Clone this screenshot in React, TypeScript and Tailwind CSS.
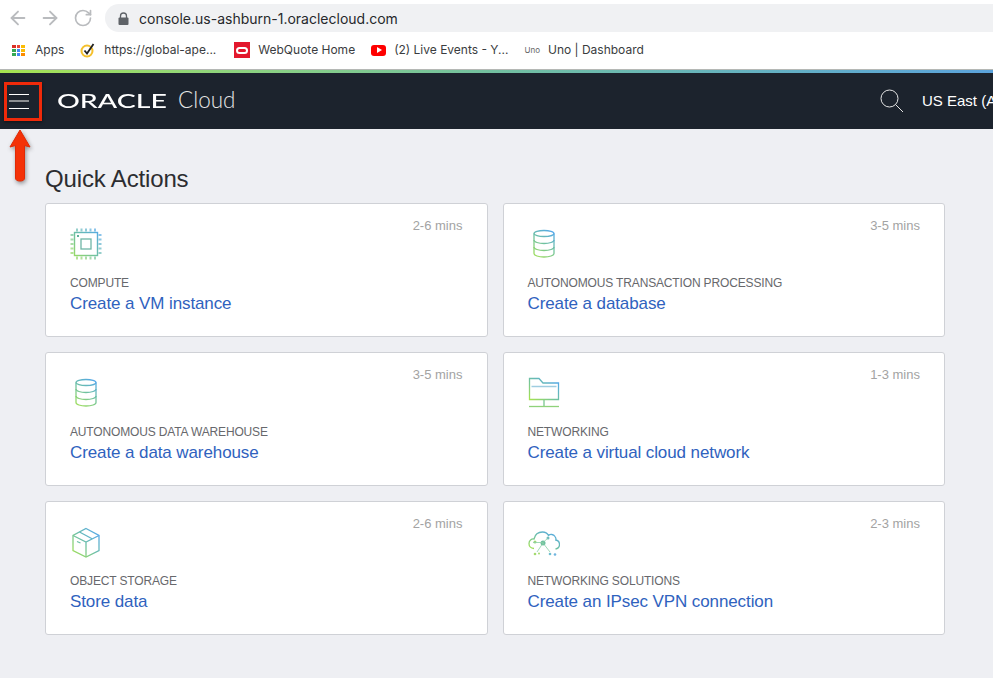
import { ArrowLeft, ArrowRight, RotateCw } from "lucide-react"
import type { ReactNode } from "react"

const Grad = ({ id }: { id: string }) => (
  <defs>
    <linearGradient id={id} x1="0" y1="1" x2="1" y2="0">
      <stop offset="0" stopColor="#a6e34f" />
      <stop offset="0.5" stopColor="#6dbfa6" />
      <stop offset="1" stopColor="#4fa3f7" />
    </linearGradient>
  </defs>
)

const ChipIcon = () => (
  <svg width="36" height="36" viewBox="0 0 36 36" fill="none" className="-m-0.5">
    <defs>
      <linearGradient id="chip" gradientUnits="userSpaceOnUse" x1="2" y1="34" x2="34" y2="2">
        <stop offset="0" stopColor="#a6e34f" />
        <stop offset="0.5" stopColor="#6dbfa6" />
        <stop offset="1" stopColor="#4fa3f7" />
      </linearGradient>
    </defs>
    <rect x="6.5" y="6.5" width="23" height="23" stroke="url(#chip)" strokeWidth="1.4" />
    <rect x="13" y="13" width="10" height="10" stroke="#6fb5a6" strokeWidth="1.3" />
    <rect x="9" y="9" width="2" height="2" fill="#5fb09a" />
    <path d="M9 2.500v3M13.500 2.500v3M18 2.500v3M22.500 2.500v3M27 2.500v3M9 30.500v3M13.500 30.500v3M18 30.500v3M22.500 30.500v3M27 30.500v3M2.500 9h3M2.500 13.500h3M2.500 18h3M2.500 22.500h3M2.500 27h3M30.500 9h3M30.500 13.500h3M30.500 18h3M30.500 22.500h3M30.500 27h3" stroke="url(#chip)" strokeWidth="2" opacity="0.7" />
  </svg>
)

const DbIcon = ({ id }: { id: string }) => (
  <svg width="32" height="32" viewBox="0 0 32 32" fill="none">
    <defs>
      <linearGradient id={id} gradientUnits="userSpaceOnUse" x1="6" y1="31" x2="26" y2="1">
        <stop offset="0" stopColor="#a6e34f" />
        <stop offset="0.55" stopColor="#6dbfa6" />
        <stop offset="1" stopColor="#4fa3f7" />
      </linearGradient>
    </defs>
    <path d="M6 5.500v20c0 2 4.500 3.500 10 3.500s10-1.500 10-3.500v-20" stroke={`url(#${id})`} strokeWidth="1.3" />
    <ellipse cx="16" cy="5.500" rx="10" ry="3" stroke={`url(#${id})`} strokeWidth="1.3" />
    <path d="M6 12c0 2 4.500 3.500 10 3.500s10-1.500 10-3.500M6 19c0 2 4.500 3.500 10 3.500s10-1.500 10-3.500" stroke={`url(#${id})`} strokeWidth="1.3" />
  </svg>
)

const FolderIcon = () => (
  <svg width="32" height="32" viewBox="0 0 32 32" fill="none">
    <Grad id="folder" />
    <path d="M1.500 22.500V1.500h9.500l4 4.500h15.500v16.500z" stroke="url(#folder)" strokeWidth="1.3" />
    <path d="M3.500 9.500h25" stroke="#9fcde0" strokeWidth="1.5" />
    <path d="M16 23v6" stroke="#7cc68f" strokeWidth="1.3" />
    <path d="M1 29.500h30" stroke="#8fd27a" strokeWidth="1.3" />
  </svg>
)

const BoxIcon = () => (
  <svg width="32" height="32" viewBox="0 0 32 32" fill="none">
    <Grad id="box" />
    <path d="M16 2.500 29 9.500v15L16 31 3 24.500v-15z" stroke="url(#box)" strokeWidth="1.3" />
    <path d="M3 9.500 16 16l13-6.500M16 16v15M9.500 6l13 7" stroke="url(#box)" strokeWidth="1.3" />
    <path d="M7 15.500l3.500 1.500" stroke="#6dbfa6" strokeWidth="1.3" />
  </svg>
)

const CloudIcon = () => (
  <svg width="32" height="32" viewBox="0 0 32 32" fill="none" className="translate-y-[2px]">
    <Grad id="cloud" />
    <path d="M6 20.500c-3.500 0-5-2.500-5-5 0-3 2.500-5 5-4.500C7 6.500 10.500 4 14.500 4c3 0 5 1.500 6 3.500 1.500-1.500 5-1.500 6.500 1 1 1.500 1 3 .8 3.500 2.500.5 3.700 2.500 3.700 4.500 0 2.500-1.500 4-4 4.500" stroke="url(#cloud)" strokeWidth="1.3" />
    <circle cx="15" cy="15" r="2.500" fill="#6cbf9f" />
    <circle cx="7" cy="14" r="1.500" fill="#9ed67a" />
    <circle cx="20" cy="10" r="1.500" fill="#6fbcc0" />
    <path d="M5 14.500h10l5-4.500M15 15l-6 9M15 15l7 9" stroke="#8ccfa6" strokeWidth="0.8" />
    <circle cx="7" cy="26" r="1.300" fill="#a3da70" />
    <circle cx="11" cy="25.500" r="1" fill="#a3da70" />
    <circle cx="22" cy="26" r="1.300" fill="#70bfd0" />
    <circle cx="27" cy="26.500" r="1.300" fill="#70b5e0" />
  </svg>
)

const Card = ({ icon, time, label, title }: { icon: ReactNode; time: string; label: string; title: string }) => (
  <div className="h-[134px] rounded-[3px] border border-[#cfd1d6] bg-white pl-[24px] pr-[24px] pt-[14px]">
    <div className="flex h-[44px] items-start justify-between">
      <div className="mt-[10px] h-8 w-8">{icon}</div>
      <span className="text-[13px] leading-[16px] text-[#a3a3a3]">{time}</span>
    </div>
    <div className="mt-[13px] text-[12px] leading-[16px] tracking-[-0.15px] text-[#67686c]">{label}</div>
    <div className="mt-[1px] text-[17px] leading-[24px] tracking-[-0.1px] text-[#2f62be]">{title}</div>
  </div>
)

const Bookmark = ({ icon, text }: { icon: ReactNode; text: string }) => (
  <div className="flex items-center gap-[8px] whitespace-nowrap">
    {icon}
    <span>{text}</span>
  </div>
)

export default function App() {
  return (
    <div className="relative h-[678px] w-[993px] overflow-hidden bg-[#eeeff3] font-['Liberation_Sans',sans-serif]">
      {/* browser toolbar */}
      <div className="flex h-[36px] items-center bg-white pl-[7px]">
        <div className="flex w-[98px] items-center gap-[10px] text-[#b9bbbe]">
          <ArrowLeft size={22} strokeWidth={2} />
          <ArrowRight size={22} strokeWidth={2} />
          <RotateCw size={20} strokeWidth={2} className="ml-[2px]" />
        </div>
        <div className="flex h-[28px] flex-1 items-center gap-[10px] rounded-l-full bg-[#f0f1f3] pl-[13px] font-['Inter',sans-serif] text-[14px] text-[#26282b]">
          <svg width="11" height="13" viewBox="0 0 11 13" fill="none">
            <path d="M2.500 6V4a3 3 0 0 1 6 0v2" stroke="#5f6368" strokeWidth="1.300" />
            <rect x="0.500" y="5.500" width="10" height="7.500" rx="1" fill="#5f6368" />
          </svg>
          <span>console.us-ashburn-1.oraclecloud.com</span>
        </div>
      </div>
      {/* bookmarks */}
      <div className="flex h-[33px] items-center gap-[16px] bg-white pb-[5px] pl-[12px] font-['Inter',sans-serif] text-[12px] text-[#3a3c40]">
        <Bookmark
          text="Apps"
          icon={
            <div className="mr-[2px] grid w-[13px] grid-cols-3 gap-[1px]">
              <i className="h-[3px] bg-[#d93025]" />
              <i className="h-[3px] bg-[#ea4335]" />
              <i className="h-[3px] bg-[#fbbc04]" />
              <i className="h-[3px] bg-[#34a853]" />
              <i className="h-[3px] bg-[#4285f4]" />
              <i className="h-[3px] bg-[#fbbc04]" />
              <i className="h-[3px] bg-[#34a853]" />
              <i className="h-[3px] bg-[#4285f4]" />
              <i className="h-[3px] bg-[#fb8c00]" />
            </div>
          }
        />
        <Bookmark
          text="https://global-ape..."
          icon={
            <svg width="16" height="16" viewBox="0 0 16 16" fill="none">
              <circle cx="7" cy="9" r="5.500" stroke="#f5c02c" strokeWidth="2" />
              <path d="M4.500 8.500 7 11.500 13.500 2" stroke="#222" strokeWidth="1.800" />
            </svg>
          }
        />
        <Bookmark
          text="WebQuote Home"
          icon={
            <div className="ml-[2px] flex h-4 w-4 items-center justify-center bg-[#e3182d]">
              <div className="h-[7px] w-3 rounded-full border-2 border-white" />
            </div>
          }
        />
        <Bookmark
          text="(2) Live Events - Y..."
          icon={
            <div className="flex h-[11px] w-[15px] items-center justify-center rounded-[3px] bg-[#f00]">
              <div className="ml-[1px] h-0 w-0 border-y-[3px] border-l-[5px] border-y-transparent border-l-white" />
            </div>
          }
        />
        <Bookmark text="Uno | Dashboard" icon={<span className="text-[8px] text-[#666]">Uno</span>} />
      </div>
      {/* gradient strip */}
      <div className="h-[4px] border-t border-[#b5b8b5] bg-gradient-to-r from-[#a6e34f] via-[#72bfa0] to-[#5ba3dc]" />
      {/* console header */}
      <div className="flex h-[56px] items-center bg-[#1c232d] text-white">
        <div className="ml-[9px] flex w-[20px] flex-col gap-[5.500px]">
          <i className="h-[1px] bg-white" />
          <i className="h-[2px] bg-[#8c8f92]" />
          <i className="h-[1px] bg-white" />
        </div>
        <div className="-mt-[2px] ml-[28px] w-[109px]">
          <div className="origin-left scale-x-[1.5] font-['Lato',sans-serif] text-[19px] leading-none font-medium">ORACLE</div>
        </div>
        <span className="-mt-[3px] ml-[12px] font-['Lato',sans-serif] text-[22.500px] font-light text-[#e6e6e6]">Cloud</span>
        <svg width="26" height="26" viewBox="0 0 26 26" fill="none" stroke="#e5e5e5" strokeWidth="1" className="ml-auto">
          <circle cx="10.500" cy="10.500" r="8.500" />
          <path d="M16.500 16.500 24 24" />
        </svg>
        <span className="ml-[17px] w-[71px] overflow-hidden text-[15px] whitespace-nowrap">US East (Ashburn)</span>
      </div>
      {/* content */}
      <div className="pl-[45px] pr-[48px]">
        <h1 className="pt-[35px] pb-[10px] text-[24px] leading-[29px] tracking-[-0.15px] text-[#2c2d30]">Quick Actions</h1>
        <div className="grid grid-cols-2 gap-[15px]">
          <Card icon={<ChipIcon />} time="2-6 mins" label="COMPUTE" title="Create a VM instance" />
          <Card icon={<DbIcon id="db1" />} time="3-5 mins" label="AUTONOMOUS TRANSACTION PROCESSING" title="Create a database" />
          <Card icon={<DbIcon id="db2" />} time="3-5 mins" label="AUTONOMOUS DATA WAREHOUSE" title="Create a data warehouse" />
          <Card icon={<FolderIcon />} time="1-3 mins" label="NETWORKING" title="Create a virtual cloud network" />
          <Card icon={<BoxIcon />} time="2-6 mins" label="OBJECT STORAGE" title="Store data" />
          <Card icon={<CloudIcon />} time="2-3 mins" label="NETWORKING SOLUTIONS" title="Create an IPsec VPN connection" />
        </div>
      </div>
      {/* annotation over the hamburger */}
      <div className="absolute top-[82px] left-[4px] h-[39px] w-[38px] border-[3px] border-[#f02a0a] shadow-[0_1px_3px_rgba(0,0,0,0.5)]" />
      <svg width="24" height="56" viewBox="0 0 24 56" className="absolute top-[129px] left-[8px] drop-shadow-[1px_2px_2px_rgba(0,0,0,0.4)]">
        <path d="M12 1 22 18 16.500 16.500 16.500 49Q16.500 52 12 52 7.500 52 7.500 49L7.500 16.500 2 18z" fill="#f43208" stroke="#e02a05" strokeWidth="1" strokeLinejoin="round" />
      </svg>
    </div>
  )
}
